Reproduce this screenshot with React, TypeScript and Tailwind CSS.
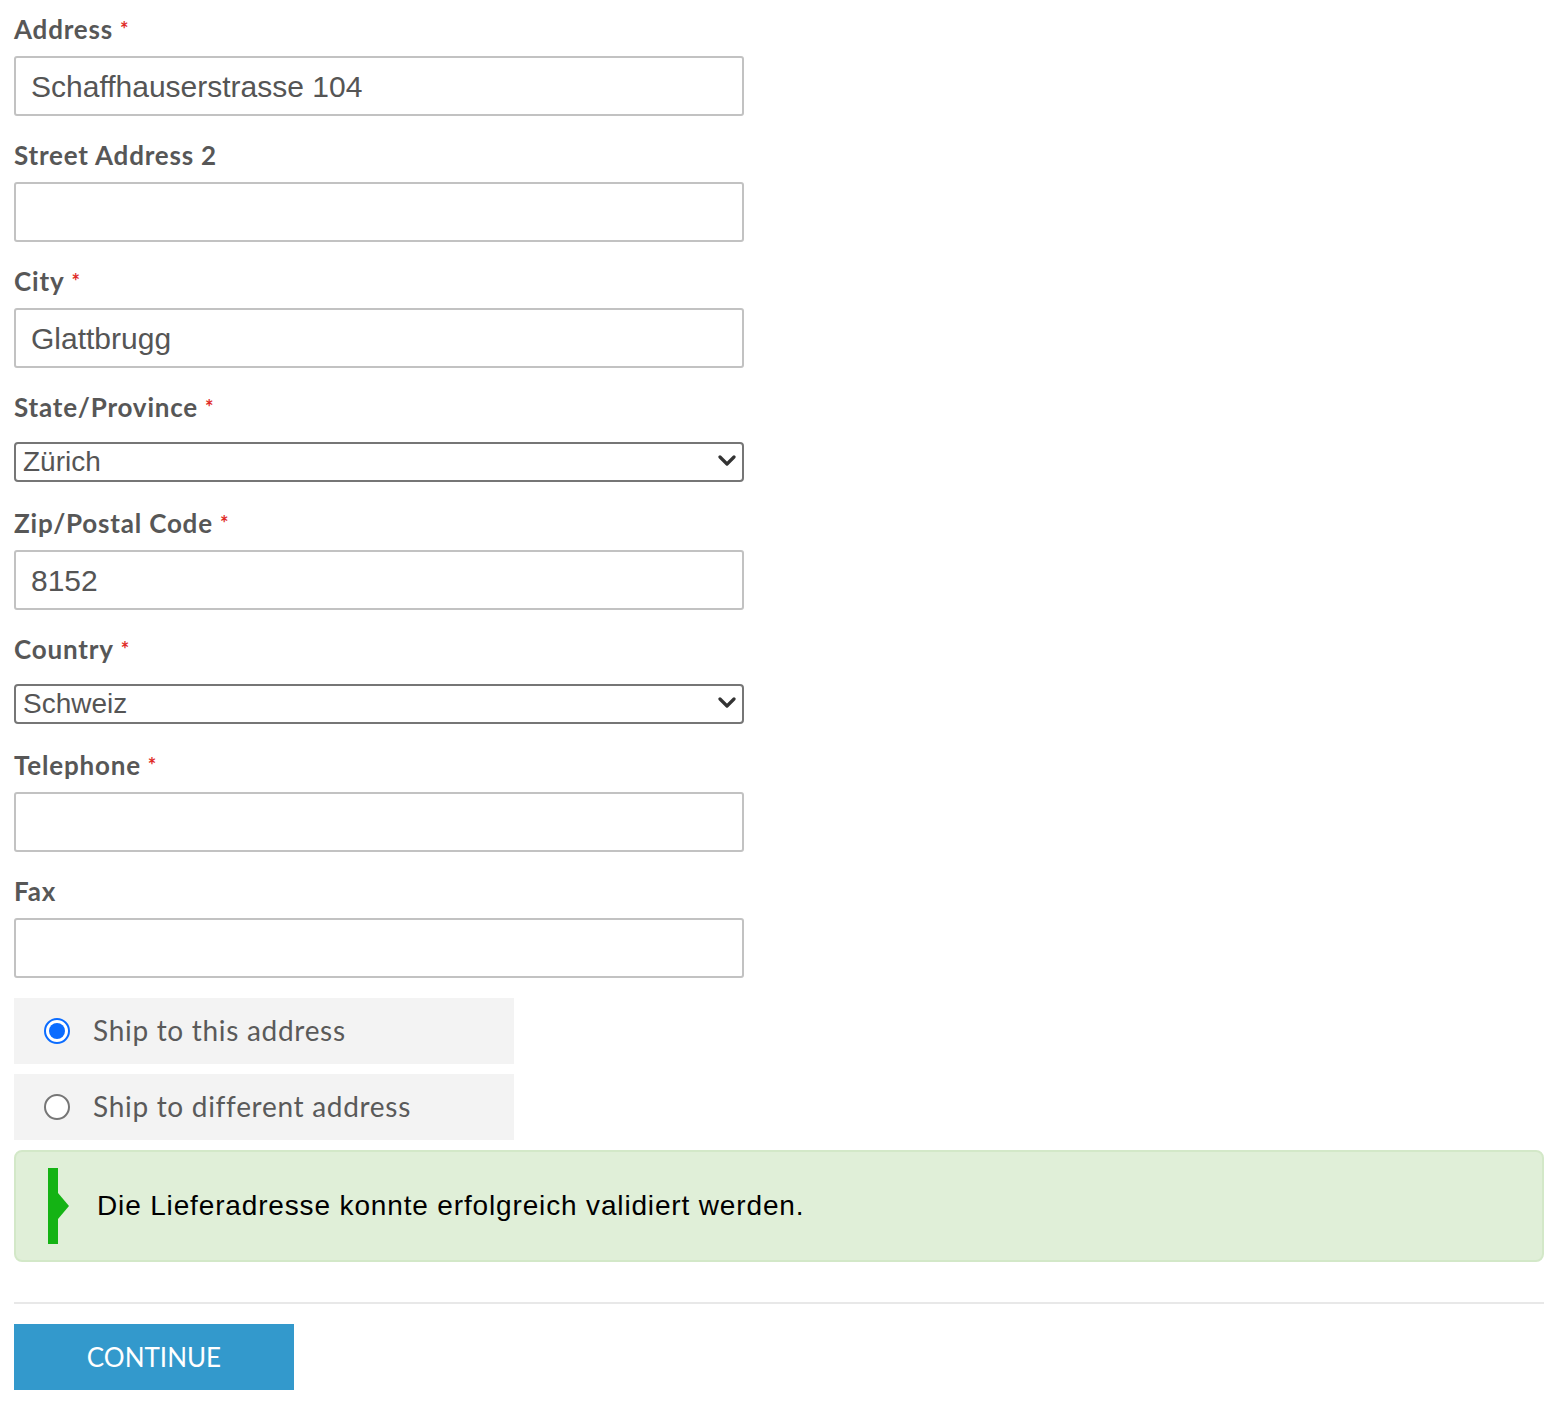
import React from 'react';

const labelFont = { fontFamily: 'Lato, "Open Sans", sans-serif' };

function Label({ text, required }: { text: string; required?: boolean }) {
  return (
    <div
      className="h-[32px] text-[26px] leading-[32px] font-bold text-[#575757] tracking-[0.8px]"
      style={labelFont}
    >
      {text}
      {required && <span className="ml-[7px] text-[20px] align-top text-[#e02b27]">*</span>}
    </div>
  );
}

function TextField({ label, value, required }: { label: string; value?: string; required?: boolean }) {
  return (
    <div className="mb-[23px]">
      <Label text={label} required={required} />
      <div className="mt-[11px] flex h-[60px] w-[730px] items-center rounded-[3px] border-2 border-[#c2c2c2] bg-white px-[15px] font-['Liberation_Sans',Arial,sans-serif] text-[30px] text-[#555]">
        {value}
      </div>
    </div>
  );
}

function SelectField({ label, value }: { label: string; value: string }) {
  return (
    <div className="mb-[25px]">
      <Label text={label} required />
      <div className="relative mt-[19px] w-[730px]">
        <select
          defaultValue={value}
          className="h-[40px] w-full appearance-none rounded-[4px] border-2 border-[#767676] bg-white pl-[7px] font-['Liberation_Sans',Arial,sans-serif] text-[28px] leading-[36px] text-[#555] outline-none"
        >
          <option>{value}</option>
        </select>
        <svg
          className="pointer-events-none absolute right-[8px] top-[13px]"
          width="18"
          height="12"
          viewBox="0 0 18 12"
        >
          <path d="M2 2 L9 9 L16 2" fill="none" stroke="#333" strokeWidth="3.2" strokeLinecap="round" strokeLinejoin="round" />
        </svg>
      </div>
    </div>
  );
}

function RadioRow({ text, checked }: { text: string; checked?: boolean }) {
  return (
    <div className="flex h-[66px] w-[500px] items-center bg-[#f3f3f3] pl-[30px]">
      {checked ? (
        <span className="flex h-[26px] w-[26px] items-center justify-center rounded-full border-2 border-[#0b6cff] bg-white">
          <span className="h-[16px] w-[16px] rounded-full bg-[#0b6cff]" />
        </span>
      ) : (
        <span className="h-[26px] w-[26px] rounded-full border-2 border-[#767676] bg-white" />
      )}
      <span className="-mt-[3px] ml-[23px] text-[28px] tracking-[0.7px] text-[#5a5a5a]" style={labelFont}>
        {text}
      </span>
    </div>
  );
}

export default function App() {
  return (
    <div className="min-h-[1406px] bg-white pl-[14px] pr-[20px] pt-[13px]">
      <TextField label="Address" value="Schaffhauserstrasse 104" required />
      <TextField label="Street Address 2" />
      <TextField label="City" value="Glattbrugg" required />
      <SelectField label="State/Province" value="Zürich" />
      <TextField label="Zip/Postal Code" value="8152" required />
      <SelectField label="Country" value="Schweiz" />
      <TextField label="Telephone" required />
      <TextField label="Fax" />

      <div className="-mt-[3px] flex flex-col gap-[10px]">
        <RadioRow text="Ship to this address" checked />
        <RadioRow text="Ship to different address" />
      </div>

      <div className="mt-[10px] flex h-[112px] items-center rounded-[8px] border-2 border-[#d3e8c8] bg-[#e0efd8] pl-[32px]">
        <svg width="24" height="76" viewBox="0 0 24 76">
          <rect x="0" y="0" width="10" height="76" fill="#14b314" />
          <path d="M10 25 L21 38 L10 51 Z" fill="#14b314" />
        </svg>
        <span className="ml-[25px] font-['Liberation_Sans',Arial,sans-serif] text-[28px] tracking-[0.85px] text-black">
          Die Lieferadresse konnte erfolgreich validiert werden.
        </span>
      </div>

      <div className="mt-[40px] h-[2px] bg-[#e8e8e8]" />

      <button
        className="mt-[20px] flex h-[66px] w-[280px] items-center justify-center bg-[#3399cc] text-[26px] text-white"
        style={labelFont}
      >
        CONTINUE
      </button>
    </div>
  );
}
